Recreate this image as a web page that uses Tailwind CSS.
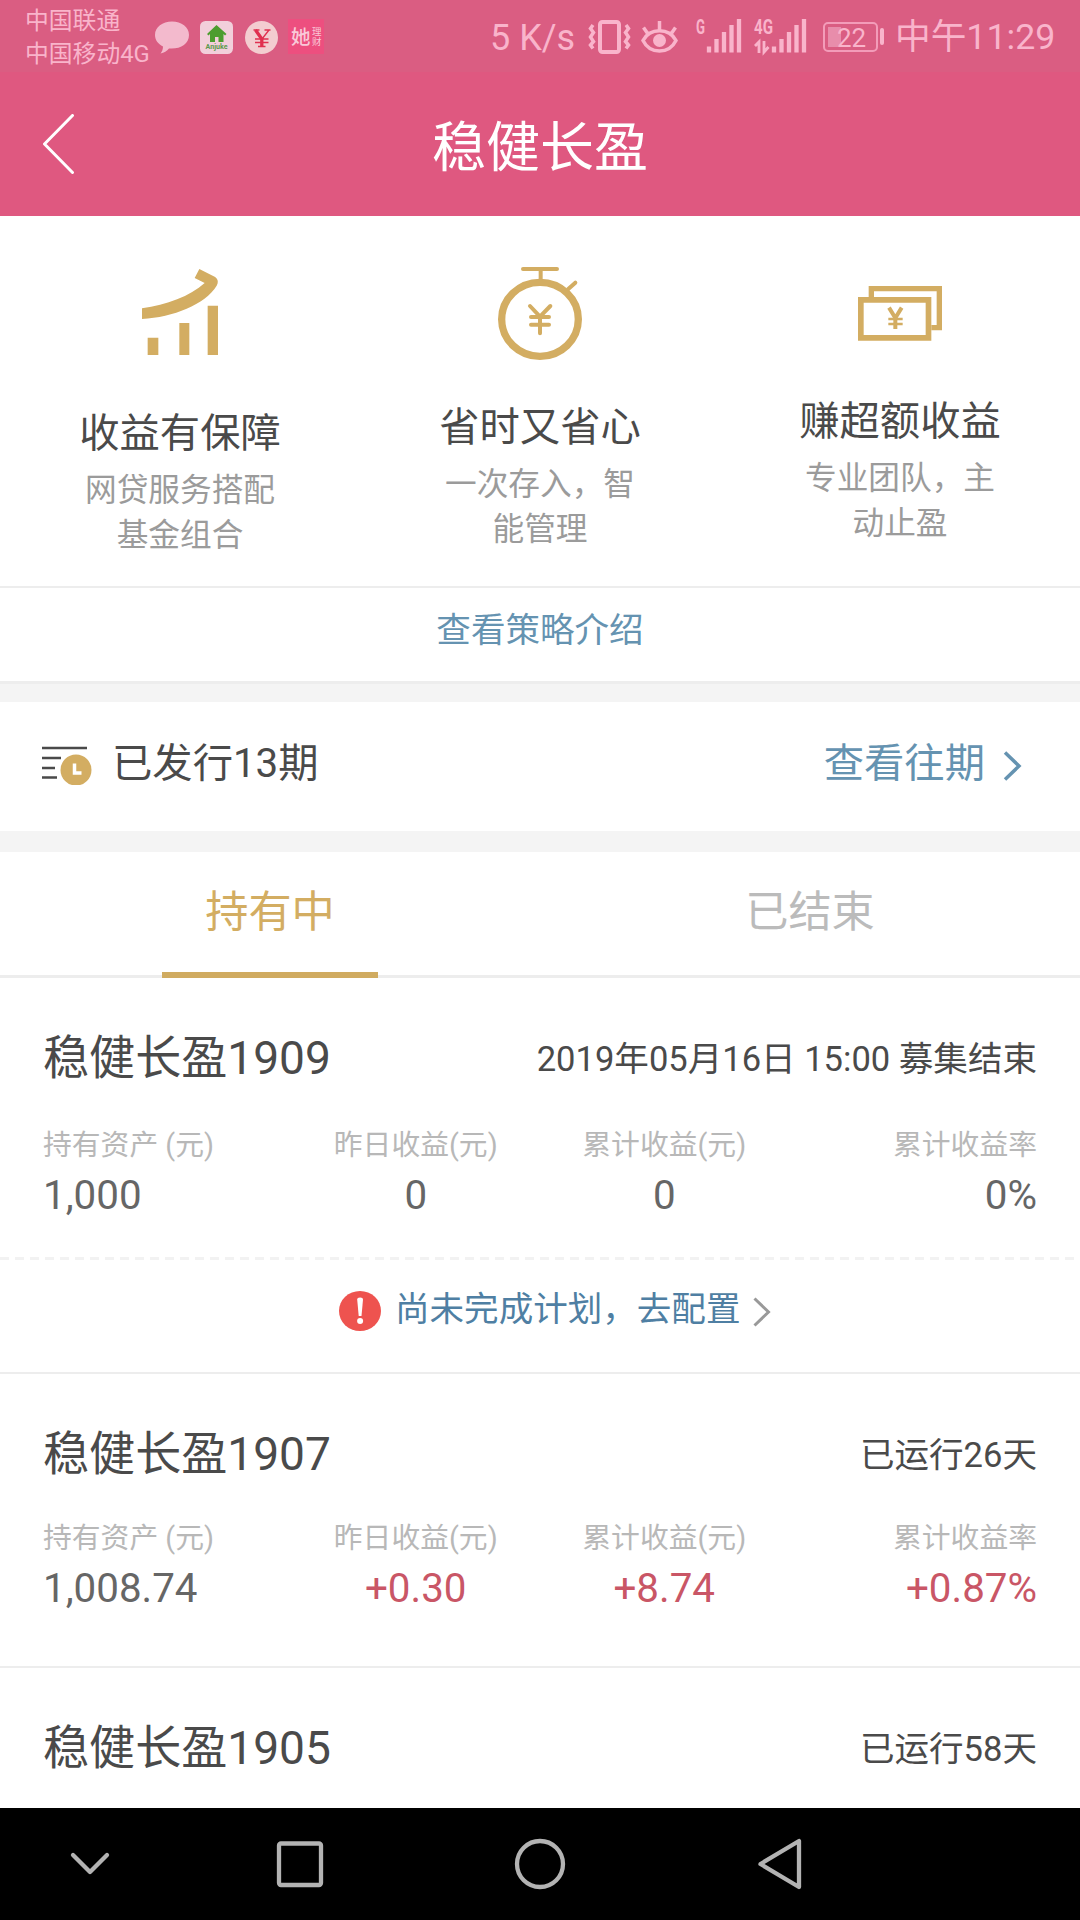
<!DOCTYPE html>
<html lang="zh-CN">
	<head>
		<meta charset="UTF-8" />
		<meta name="viewport" content="width=device-width, initial-scale=1.0" />
		<title>稳健长盈</title>
		<script src="https://cdn.jsdelivr.net/npm/@tailwindcss/browser@4"></script>
	</head>
	<body class="bg-white w-[1080px] h-[1920px] overflow-hidden flex flex-col font-['Roboto','Noto_Sans_CJK_SC',sans-serif] text-[#4a4a4a]">
		<!-- Status bar -->
		<div class="h-[72px] shrink-0 bg-[#da5d82] text-[#f9b4cb] flex items-center">
			<div class="ml-[25px] w-[130px] text-[23.8px] leading-[33.5px] whitespace-nowrap pt-1">
				<div>中国联通</div>
				<div>中国移动4G</div>
			</div>
			<svg class="w-[34px] h-[33px] mt-0.5" viewBox="0 0 34 33" fill="#f3bacd">
				<path d="M17 0.5C7.500 0.500 0 6 0 14c0 5 3 9 8 11.500 0 3-1 5-2.500 7C9 32 12 30 14 27.500c11 1 20-4.500 20-13.500C34 6 26.500 0.500 17 0.500z" />
			</svg>
			<svg class="w-[33px] h-[33px] ml-[11px] mt-0.5" viewBox="0 0 33 33">
				<rect width="33" height="33" rx="5.5" fill="#f2cfdb" />
				<path d="M16.500 4L7 13l1.500 1.500L10 13v8h5v-5h3.500v5h5v-8l1.500 1.500L26.500 13z" fill="#4c9d2f" />
				<text x="16.5" y="28.300" font-size="7.500" font-weight="700" textLength="22" lengthAdjust="spacingAndGlyphs" text-anchor="middle" fill="#5b9a4b">Anjuke</text>
			</svg>
			<svg class="w-[33px] h-[33px] ml-3 mt-0.5" viewBox="0 0 33 33">
				<circle cx="16.500" cy="16.500" r="16.500" fill="#f3cdd0" />
				<path d="M8.500 9h6M19.500 9h6M24 9l-7 9M10 18h13.500M10 21.500h13.500M13 25.500h7.500" fill="none" stroke="#e0304f" stroke-width="1.300" />
				<path d="M16.800 16.500v9M10.500 9l6.300 9" fill="none" stroke="#e0304f" stroke-width="3.300" />
			</svg>
			<svg class="w-9 h-[35px] ml-[10px] overflow-visible" viewBox="0 0 36 35" fill="#f9c9d8">
				<rect width="36" height="35" fill="#ed4f7f" />
				<text x="3" y="24.500" font-size="19.500" font-weight="500">她</text>
				<g transform="translate(24 17) scale(0.5)">
					<text x="0" y="-1.500" font-size="19">理</text>
					<text x="0" y="17.500" font-size="19">财</text>
				</g>
			</svg>
			<span class="ml-[166px] w-[98px] mt-[3px] text-[36px] whitespace-nowrap">5 K/s</span>
			<!-- Vibrate, eye -->
			<svg class="w-[43px] h-[34px] mt-px" viewBox="0 0 43 34" fill="none" stroke="#f9b4cb">
				<rect x="12" y="2" width="19" height="30" rx="2.500" stroke-width="4" />
				<path d="M5 5L2.500 8.500 5.500 12.500 2.500 17 5.500 21.500 2.500 25 5 28.500M38 5l2.500 3.500-3 4 3 4.500-3 4.500 3 3.500-2.500 3.500" stroke-width="3.500" />
			</svg>
			<svg class="w-[37px] h-[32px] ml-[10px] mt-px" viewBox="0 0 37 32" fill="none" stroke="#f9b4cb" stroke-width="3.500">
				<path d="M2 19.500C9 6.500 28 6.500 35 19.500 28 33.500 9 33.500 2 19.500zM18.500 9V0M7 13L2.500 6.500M30 13l4.500-6.500" />
				<circle cx="18.500" cy="19.500" r="6.500" fill="#f9b4cb" stroke="none" />
			</svg>
			<!-- Signal strength -->
			<svg class="w-[112px] h-[34px] ml-[18px] overflow-visible" viewBox="0 0 112 34" fill="none" stroke="#f9b4cb" stroke-width="4.300">
				<path d="M13 33.500v-6M20.500 33.500V20M28 33.500V13M35.500 33.500V6M43 33.500V0M78 33.500v-6M85.500 33.500V20M93 33.500V13M100.500 33.500V6M108 33.500V0" />
				<path d="M59 27l4-4v11M68 22v11l4.500-5" stroke-width="2.800" />
				<text x="0" y="15" font-size="20" font-weight="700" textLength="9" lengthAdjust="spacingAndGlyphs" fill="#f9b4cb" stroke="none">G</text>
				<text x="58" y="15" font-size="20" font-weight="700" textLength="19" lengthAdjust="spacingAndGlyphs" fill="#f9b4cb" stroke="none">4G</text>
			</svg>
			<!-- Battery -->
			<div class="ml-[15px] w-[55px] h-[30px] mt-0.5 p-[3px] rounded-[5px] border-2 border-[#f39cb9] flex">
				<div class="w-[13px] h-5 bg-[#e88dab]"></div>
				<span class="-ml-1 text-[26px] leading-[22px]">22</span>
			</div>
			<div class="ml-0.5 w-1 h-[17px] rounded-sm bg-[#f9b4cb]"></div>
			<span class="ml-[11px] mt-[3px] text-[35.7px] whitespace-nowrap">中午11:29</span>
		</div>

		<!-- Header -->
		<div class="h-[144px] shrink-0 bg-[#df5880] text-white flex items-center px-[42px]">
			<svg class="w-[33px] h-[60px]" viewBox="0 0 33 60" fill="none" stroke="#fff" stroke-width="3" stroke-linecap="round" stroke-linejoin="round">
				<path d="M30.500 1.500L2.500 30l28 28.500" />
			</svg>
			<h1 class="flex-1 pr-[33px] pt-2 text-center text-[54px]">稳健长盈</h1>
		</div>

		<!-- Features -->
		<div class="h-[372px] shrink-0 grid grid-cols-3 border-b-2 border-[#ededed] text-center">
			<div class="flex flex-col items-center pt-[53px]">
				<svg class="w-[76px] h-[86px]" viewBox="246 88 228 258" fill="#d3ad62">
					<path d="M263 294h32v52h-32zM358 250h30v96h-30zM443 198h32v148h-32z" />
					<path d="M246 206C320 195 390 170 434 130l-30-15 14-27 46 23c10 6 12 16 6 27C435 195 340 232 246 238z" />
				</svg>
				<h2 class="mt-[51px] text-[40.32px] leading-[56px]">收益有保障</h2>
				<p class="mt-1.5 w-[200px] text-[31.68px] leading-[45px] text-[#9b9b9b]">网贷服务搭配基金组合</p>
			</div>
			<div class="flex flex-col items-center pt-[50px]">
				<svg class="w-[84px] h-[94px]" viewBox="234 78 252 282" fill="none" stroke="#d3ad62" stroke-linecap="round">
					<ellipse cx="360" cy="238" rx="115" ry="111" stroke-width="22" />
					<path d="M309 87h102M362 90v28M444 148l22-20M330 198l30 32 31-32M333 231h54M333 254h54M360 230v50" stroke-width="12" />
				</svg>
				<h2 class="mt-10 text-[40.32px] leading-[56px]">省时又省心</h2>
				<p class="mt-1.5 w-[200px] text-[31.68px] leading-[45px] text-[#9b9b9b]">一次存入，智能管理</p>
			</div>
			<div class="flex flex-col items-center pt-[70px]">
				<svg class="w-[84px] h-[55px]" viewBox="234 138 252 165" fill="none" stroke="#d3ad62">
					<path d="M242.500 179.500h203v114h-203z" stroke-width="17" />
					<path d="M274 172v-26h204v117h-24" stroke-width="16" />
					<path d="M327 203l19 31 19-31M346 232v35" stroke-width="12" />
					<path d="M325 237h43M325 252h43" stroke-width="8" />
				</svg>
				<h2 class="mt-[53px] text-[40.32px] leading-[56px]">赚超额收益</h2>
				<p class="mt-1.5 w-[200px] text-[31.68px] leading-[45px] text-[#9b9b9b]">专业团队，主动止盈</p>
			</div>
		</div>
		<a class="h-[96px] shrink-0 border-b-3 border-[#ededed] pt-[17px] text-center text-[34.56px] leading-[50px] text-[#6593b1]">查看策略介绍</a>

		<!-- Issued periods -->
		<div class="h-[168px] shrink-0 border-t-18 border-b-21 border-[#f4f4f4] flex items-center pl-[42px] pr-[58px] text-[40.32px]">
			<svg class="w-[50px] h-[39px] -mt-0.5" viewBox="0 0 50 39" fill="none" stroke="#4a4a4a" stroke-width="2.500">
				<path d="M0 2h45M0 12h19M0 22h13M0 31.500h15" />
				<circle cx="34" cy="24" r="15.500" fill="#d3ad62" stroke="none" />
				<path d="M32.500 17.500v9.500h7" stroke="#fff" stroke-width="3.500" />
			</svg>
			<span class="ml-5 -mt-1">已发行13期</span>
			<a class="ml-auto -mt-1 text-[#6593b1]">查看往期</a>
			<svg class="ml-[18px] -mt-0.5 w-[19px] h-[30px]" viewBox="0 0 19 30" fill="none" stroke="#6593b1" stroke-width="3.500">
				<path d="M2 1.500L16 15 2 28.500" />
			</svg>
		</div>

		<!-- Tabs -->
		<div class="h-[126px] shrink-0 border-b-3 border-[#ededed] grid grid-cols-2 text-[43.2px] text-center">
			<div class="flex justify-center">
				<div class="h-[126px] w-[216px] border-b-6 border-[#d0ab60] text-[#d3ad62] leading-[122px]">持有中</div>
			</div>
			<div class="leading-[122px] text-[#bbbbbb]">已结束</div>
		</div>

		<!-- Holdings -->
		<div class="h-[282px] shrink-0 px-[43px] pt-[48px]">
			<div class="flex justify-between items-center">
				<h3 class="text-[46.08px] leading-[64px]">稳健长盈1909</h3>
				<span class="pt-0.5 text-[34.56px] leading-[62px]">2019年05月16日 15:00 募集结束</span>
			</div>
			<div class="mt-[35px] grid grid-cols-4 text-center text-[28.8px] leading-10 text-[#b8b8b8]">
				<span class="text-left">持有资产 (元)</span>
				<span>昨日收益(元)</span>
				<span>累计收益(元)</span>
				<span class="text-right">累计收益率</span>
			</div>
			<div class="mt-1.5 grid grid-cols-4 text-center text-[40.32px] leading-[50px] text-[#666666]">
				<span class="text-left">1,000</span>
				<span>0</span>
				<span>0</span>
				<span class="text-right">0%</span>
			</div>
		</div>
		<div class="h-[115px] shrink-0 border-b-2 border-[#ededed] flex items-center pl-[339px] bg-[repeating-linear-gradient(90deg,#f2f2f2_0_9px,#fff_9px_15px)] bg-[length:100%_3px] bg-no-repeat -mt-[3px] box-content">
			<svg class="w-[42px] h-10 -mt-2" viewBox="0 0 42 40">
				<ellipse cx="21" cy="20" rx="21" ry="20" fill="#ee534f" />
				<path d="M18.200 8.500q0-2 2.900-2t2.900 2l-1.500 16.500h-2.800z" fill="#fff" />
				<circle cx="21.100" cy="30" r="3" fill="#fff" />
			</svg>
			<a class="ml-[14px] -mt-2.5 text-[34.56px] text-[#4f7fa3]">尚未完成计划，去配置</a>
			<svg class="ml-[13px] -mt-1.5 w-[18px] h-[30px]" viewBox="0 0 18 30" fill="none" stroke="#999" stroke-width="3">
				<path d="M1.500 1.500L15.500 15l-14 13.500" />
			</svg>
		</div>

		<div class="h-[294px] shrink-0 px-[43px] pt-[48px] border-b-2 border-[#ededed]">
			<div class="flex justify-between items-center">
				<h3 class="text-[46.08px] leading-[64px]">稳健长盈1907</h3>
				<span class="pt-0.5 text-[34.56px] leading-[62px]">已运行26天</span>
			</div>
			<div class="mt-8 grid grid-cols-4 text-center text-[28.8px] leading-10 text-[#b8b8b8]">
				<span class="text-left">持有资产 (元)</span>
				<span>昨日收益(元)</span>
				<span>累计收益(元)</span>
				<span class="text-right">累计收益率</span>
			</div>
			<div class="mt-1.5 grid grid-cols-4 text-center text-[40.32px] leading-[50px] text-[#c95666]">
				<span class="text-left text-[#666666]">1,008.74</span>
				<span>+0.30</span>
				<span>+8.74</span>
				<span class="text-right">+0.87%</span>
			</div>
		</div>

		<div class="h-[140px] shrink-0 px-[43px] pt-[48px] flex justify-between items-start">
			<h3 class="text-[46.08px] leading-[64px]">稳健长盈1905</h3>
			<span class="pt-0.5 text-[34.56px] leading-[62px]">已运行58天</span>
		</div>

		<!-- Navigation bar -->
		<div class="h-[112px] shrink-0 bg-black">
			<svg class="w-full h-full" viewBox="0 0 1080 112" fill="none" stroke="#b3b3b3" stroke-width="4.300" stroke-linecap="round" stroke-linejoin="round">
				<path d="M73 47l17 17 17-17" />
				<rect x="279" y="35.500" width="42" height="41.500" rx="2" />
				<circle cx="540" cy="56" r="23" />
				<path d="M760.500 56l38.500-23v46z" />
			</svg>
		</div>
	</body>
</html>
